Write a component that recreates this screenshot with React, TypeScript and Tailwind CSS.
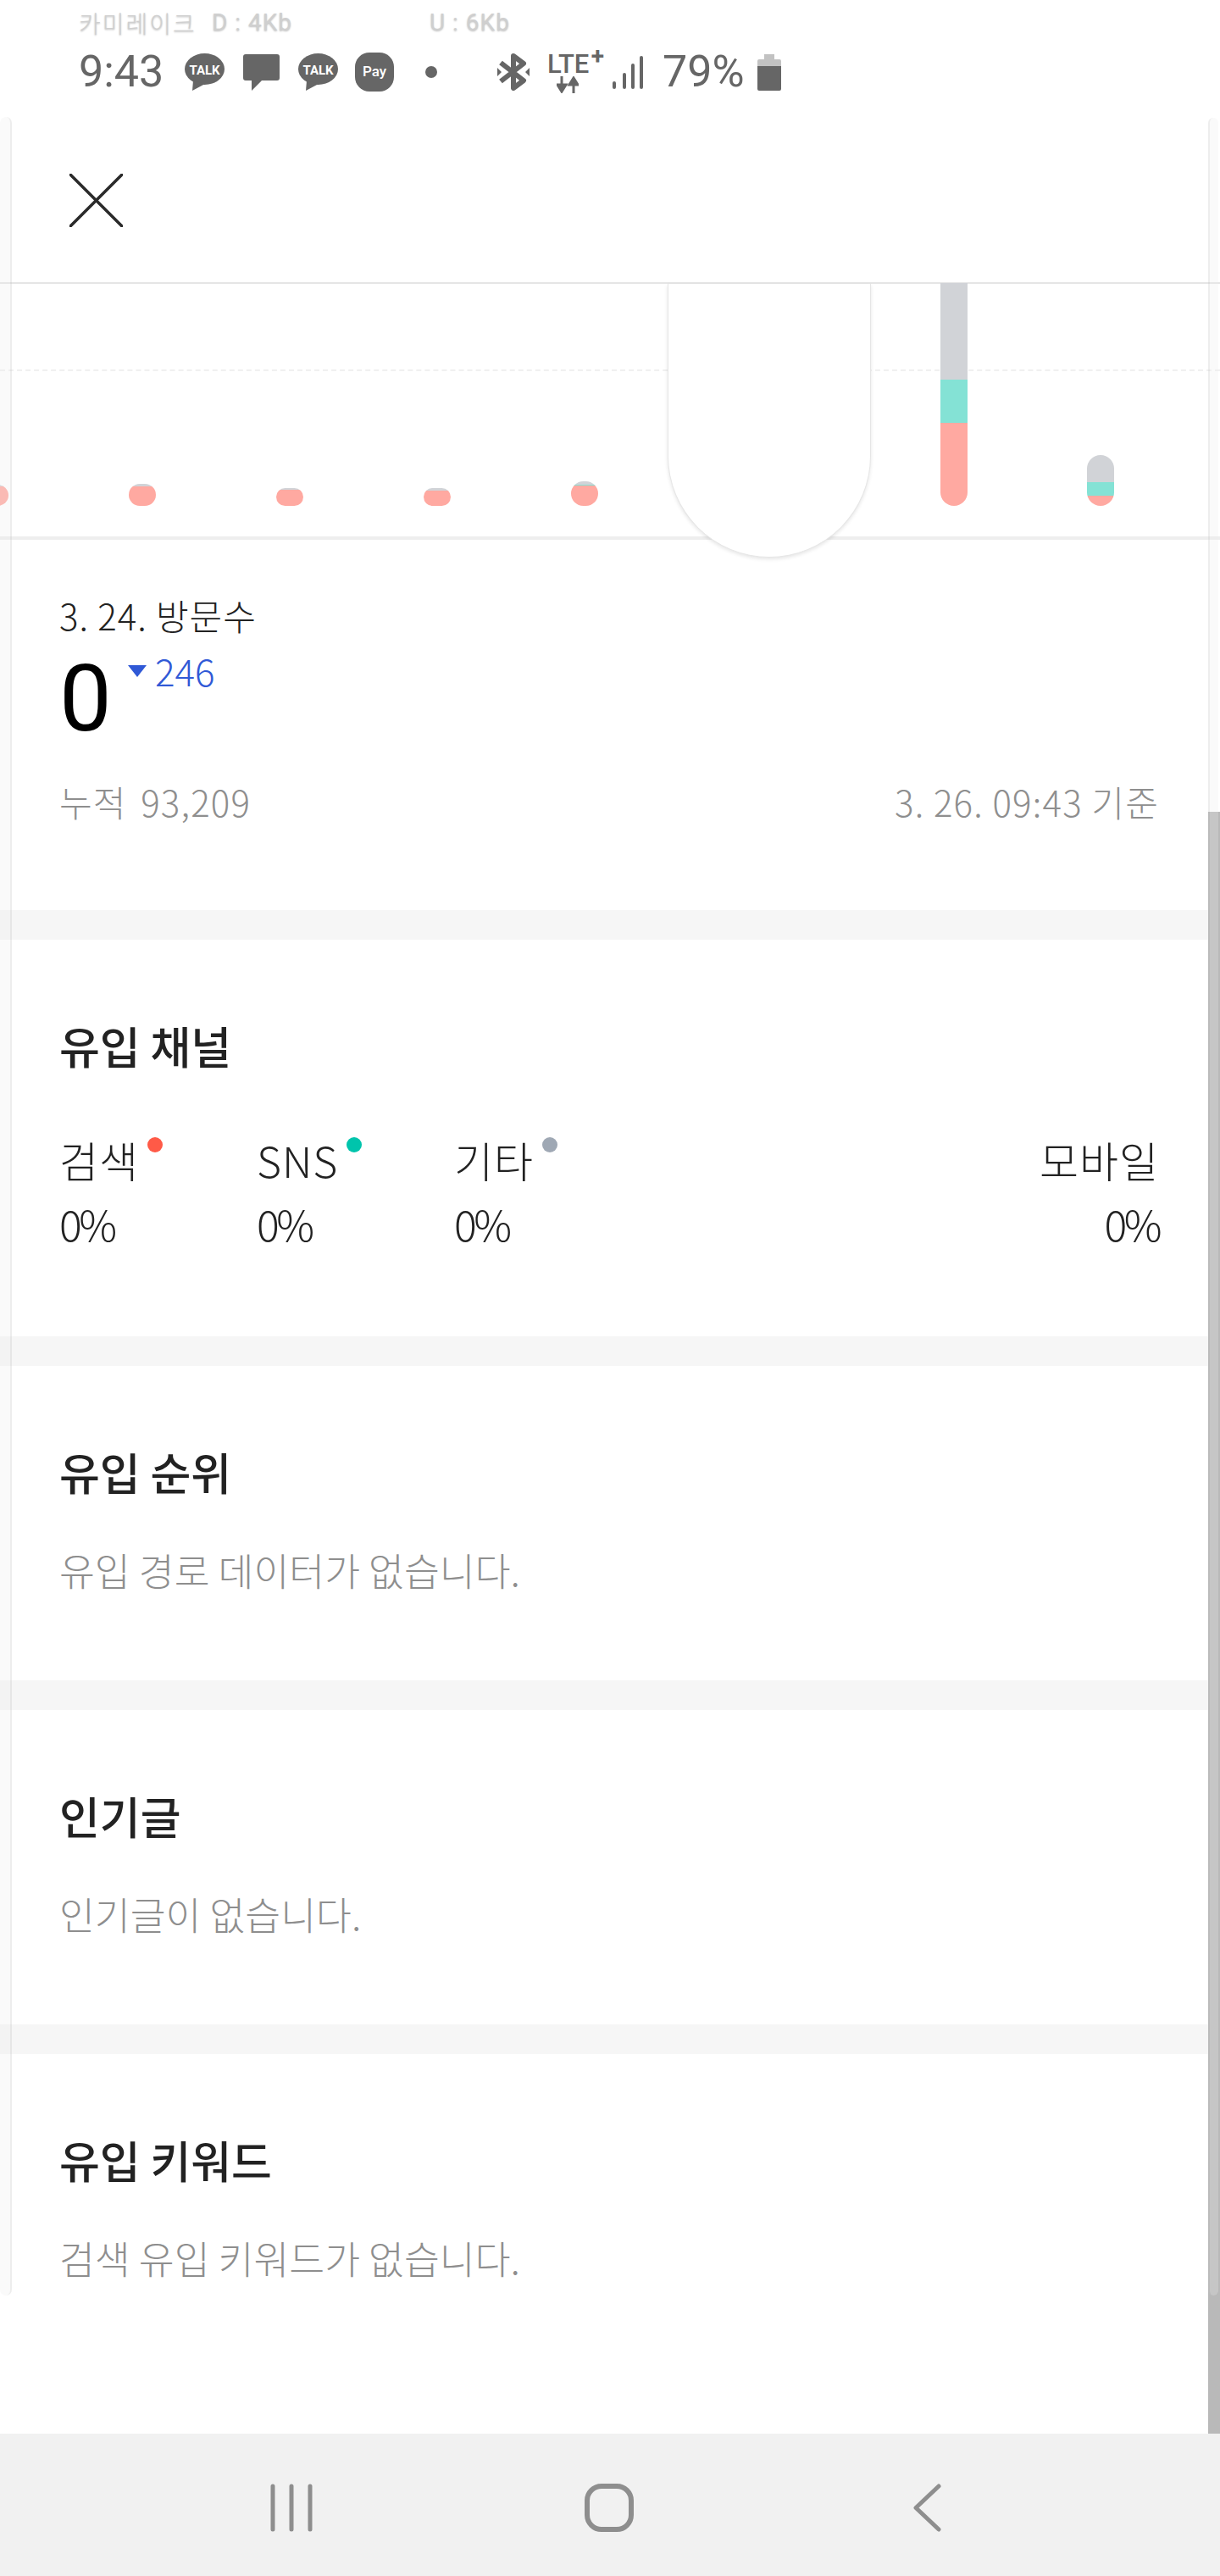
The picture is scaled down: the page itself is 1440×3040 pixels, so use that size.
import React from 'react';

const BARS = [
  { gray: 2, teal: 0, salmon: 23 },
  { gray: 3, teal: 0, salmon: 23 },
  { gray: 2, teal: 0, salmon: 19 },
  { gray: 3, teal: 0, salmon: 18 },
  { gray: 4, teal: 1, salmon: 24 },
];

const LAST_BARS = [
  { gray: 114, teal: 51, salmon: 98, open: true },
  { gray: 32, teal: 16, salmon: 12, open: false },
];

const Bar = ({ gray, teal, salmon, open }: { gray: number; teal: number; salmon: number; open?: boolean }) => (
  <div className={`w-[32px] flex flex-col overflow-hidden ${open ? 'rounded-b-[16px]' : 'rounded-[16px]'}`}>
    <div className="bg-[#d1d3d7]" style={{ height: gray }} />
    <div className="bg-[#84e2d5]" style={{ height: teal }} />
    <div className="bg-[#ffa9a1]" style={{ height: salmon }} />
  </div>
);

const TalkIcon = () => (
  <svg width="47" height="44" viewBox="0 0 47 44" className="shrink-0">
    <ellipse cx="23.5" cy="18.5" rx="23.5" ry="18.5" fill="#666" />
    <path d="M10 32 L9 44 L24 36 Z" fill="#666" />
    <text x="23.5" y="25" textAnchor="middle" fontSize="15" fontWeight="700" fill="#fff" fontFamily="Roboto, sans-serif">TALK</text>
  </svg>
);

const StatusBar = () => (
  <div className="h-[138px] bg-white pl-[93px] pt-[9px] text-[#666] font-['Roboto','Noto_Sans_CJK_KR',sans-serif]">
    <div className="flex h-[36px] items-center text-[28px] text-[#cfcfcf] [text-shadow:0_1px_2px_rgba(0,0,0,0.25)]">
      <span className="w-[157px] whitespace-pre tracking-[2px] font-['Noto_Sans_CJK_KR',sans-serif] font-light">카미레이크</span>
      <span className="w-[257px] tracking-[1px]">D : 4Kb</span>
      <span className="tracking-[1px]">U : 6Kb</span>
    </div>
    <div className="mt-[15px] flex h-[50px] items-center">
      <span className="w-[125px] text-[52px] leading-none">9:43</span>
      <TalkIcon />
      <svg width="43" height="43" viewBox="0 0 43 43" className="ml-[22px] shrink-0">
        <path d="M3 0 H40 a3 3 0 0 1 3 3 V28 a3 3 0 0 1 -3 3 H22 L10 43 V31 H3 a3 3 0 0 1 -3 -3 V3 a3 3 0 0 1 3 -3 Z" fill="#666" />
      </svg>
      <div className="ml-[22px]"><TalkIcon /></div>
      <div className="ml-[20px] flex h-[46px] w-[46px] shrink-0 items-center justify-center rounded-[17px] bg-[#666] text-[17px] font-medium text-white">Pay</div>
      <div className="ml-[37px] h-[14px] w-[14px] shrink-0 rounded-full bg-[#666]" />
      <svg width="38" height="44" viewBox="0 0 38 44" className="ml-[71px] shrink-0" fill="none">
        <path d="M4 11 L31 32 L19 41 V3 L31 12 L4 33" stroke="#666" strokeWidth="6" strokeLinejoin="round" />
        <path d="M0 17 L5 22 L0 27 Z M38 17 L33 22 L38 27 Z" fill="#666" />
      </svg>
      <div className="relative ml-[21px] h-[50px] w-[67px] shrink-0">
        <span className="absolute left-0 top-[1px] text-[31px] font-medium leading-[30px]">LTE</span>
        <span className="absolute right-0 top-[-7px] text-[28px] font-bold leading-[28px]">+</span>
        <svg width="26" height="20" viewBox="0 0 26 20" className="absolute bottom-0 left-[11px]">
          <path d="M6 0 V12 M1 10 L6 18 L11 10 Z" stroke="#666" strokeWidth="3" fill="#666" />
          <path d="M20 20 V8 M15 10 L20 2 L25 10 Z" stroke="#666" strokeWidth="3" fill="#666" />
        </svg>
      </div>
      <svg width="36" height="39" viewBox="0 0 36 39" className="ml-[10px] shrink-0" stroke="#666" strokeWidth="4" strokeLinecap="round">
        <path d="M2 32 V37 M14 22 V37 M24 11 V37 M34 2 V37" />
      </svg>
      <span className="ml-[23px] w-[112px] text-[52px] leading-none">79%</span>
      <svg width="28" height="43" viewBox="0 0 28 43" className="shrink-0">
        <path d="M8 0 H20 V6 H26 a2 2 0 0 1 2 2 V14 H0 V8 a2 2 0 0 1 2 -2 H8 Z" fill="#c2c2c2" />
        <path d="M0 14 H28 V41 a2 2 0 0 1 -2 2 H2 a2 2 0 0 1 -2 -2 Z" fill="#666" />
      </svg>
    </div>
  </div>
);

const Chart = () => (
  <div className="relative flex h-[302px] items-end overflow-x-clip border-b-4 border-[#eee] pb-[36px]">
    <div className="absolute left-0 right-0 top-[101px] border-t-2 border-dashed border-[#f0f0f0]" />
    <div className="relative -ml-[93px] flex items-end">
      {BARS.map((b, i) => (
        <div key={i} className="flex w-[174px] justify-center"><Bar {...b} /></div>
      ))}
      <div className="w-[262px]" />
      {LAST_BARS.map((b, i) => (
        <div key={i} className="flex w-[173px] justify-center"><Bar {...b} /></div>
      ))}
    </div>
    <div className="absolute left-[788px] top-0 z-10 h-[323px] w-[240px] rounded-b-[120px] border-x border-b border-[#e6e6e6] bg-white shadow-[0_2px_4px_rgba(0,0,0,0.1)]" />
  </div>
);

const Gap = () => <div className="h-[35px] shrink-0 bg-[#f6f6f6]" />;

const Section = ({ title, children }: { title: string; children: React.ReactNode }) => (
  <section className="pl-[70px] pr-[72px] pt-[93px]">
    <h2 className="h-[64px] text-[52px] font-medium leading-[64px] text-[#222]">{title}</h2>
    {children}
  </section>
);

const EmptySection = ({ title, text }: { title: string; text: string }) => (
  <div className="h-[371px]">
    <Section title={title}>
      <p className="mt-[49px] h-[68px] text-[45.5px] font-light leading-[68px] text-[#8e8e8e]">{text}</p>
    </Section>
  </div>
);

const Channel = ({ label, dot }: { label: string; dot: string }) => (
  <div className="w-[233px] text-[50px] font-light leading-[72px] text-[#222]">
    <div className="relative h-[75px] w-fit pr-[28px] tracking-[1px]">
      {label}
      <span className={`absolute right-0 top-[10px] h-[18px] w-[18px] rounded-full ${dot}`} />
    </div>
    <div className="h-[72px] tracking-[-3.5px]">0%</div>
  </div>
);

export default function App() {
  return (
    <div className="relative flex h-[3040px] w-[1440px] flex-col overflow-hidden bg-white font-['Noto_Sans_CJK_KR',sans-serif]">
      <StatusBar />
      <header className="h-[197px] shrink-0 border-b-2 border-[#e5e5e5] pl-[82px] pt-[67px]">
        <svg width="63" height="63" viewBox="0 0 63 63" stroke="#2a2a2a" strokeWidth="3.5" strokeLinecap="round">
          <path d="M1 1 L62 62 M62 1 L1 62" />
        </svg>
      </header>
      <Chart />
      <main className="flex-1">
        <div className="h-[437px] pl-[70px] pr-[72px] pt-[64px]">
          <div className="h-[49px] text-[42px] font-light leading-[49px] tracking-[1px] text-[#222]">3. 24. 방문수</div>
          <div className="flex h-[130px] items-start">
            <span className="mt-[10px] w-[81px] font-['Roboto',sans-serif] text-[110px] leading-[130px] text-black">0</span>
            <span className="mt-[35px] h-0 w-0 border-x-[11px] border-t-[14px] border-x-transparent border-t-[#3059d6]" />
            <span className="ml-[10px] mt-[17px] text-[44px] font-light leading-[48px] text-[#3059d6]">246</span>
          </div>
          <div className="mt-[36px] flex h-[60px] justify-between text-[42px] font-light leading-[60px] tracking-[1.2px] text-[#8e8e8e]">
            <span className="[word-spacing:6px]">누적 93,209</span>
            <span>3. 26. 09:43 기준</span>
          </div>
        </div>
        <Gap />
        <div className="h-[468px]">
          <Section title="유입 채널">
            <div className="mt-[66px] flex">
              <Channel label="검색" dot="bg-[#ff5a47]" />
              <Channel label="SNS" dot="bg-[#00c4ac]" />
              <Channel label="기타" dot="bg-[#9fa8b4]" />
              <div className="ml-auto text-right text-[50px] font-light leading-[72px] text-[#222]">
                <div className="h-[75px] tracking-[1px]">모바일</div>
                <div className="h-[72px] tracking-[-3.5px]">0%</div>
              </div>
            </div>
          </Section>
        </div>
        <Gap />
        <EmptySection title="유입 순위" text="유입 경로 데이터가 없습니다." />
        <Gap />
        <EmptySection title="인기글" text="인기글이 없습니다." />
        <Gap />
        <EmptySection title="유입 키워드" text="검색 유입 키워드가 없습니다." />
      </main>
      <nav className="flex h-[168px] shrink-0 bg-[#f1f1f1] pl-[319px] pt-[59px]">
        <svg width="50" height="57" viewBox="0 0 50 57" stroke="#8e8e8e" strokeWidth="5" strokeLinecap="round">
          <path d="M3 3 V54 M25 3 V54 M47 3 V54" />
        </svg>
        <svg width="58" height="57" viewBox="0 0 58 57" fill="none" stroke="#8e8e8e" strokeWidth="6" className="ml-[321px]">
          <rect x="3" y="3" width="52" height="51" rx="17" />
        </svg>
        <svg width="33" height="57" viewBox="0 0 33 57" fill="none" stroke="#8e8e8e" strokeWidth="5" strokeLinecap="round" strokeLinejoin="round" className="ml-[330px]">
          <path d="M30 3 L3 28.5 L30 54" />
        </svg>
      </nav>
      {/* edge glow strips + scrollbar sit over the page */}
      <div className="absolute right-0 top-[958px] h-[1914px] w-[14px] bg-[#b9b9b9]" />
      <div className="absolute left-0 top-[138px] h-[2571px] w-[14px] rounded-[7px] border-r-2 border-[#000]/5 bg-[#ebebeb]/[0.26]" />
      <div className="absolute left-[1426px] top-[139px] h-[2570px] w-[12px] rounded-[6px] border-l-2 border-[#000]/5 bg-[#ebebeb]/[0.26]" />
    </div>
  );
}
